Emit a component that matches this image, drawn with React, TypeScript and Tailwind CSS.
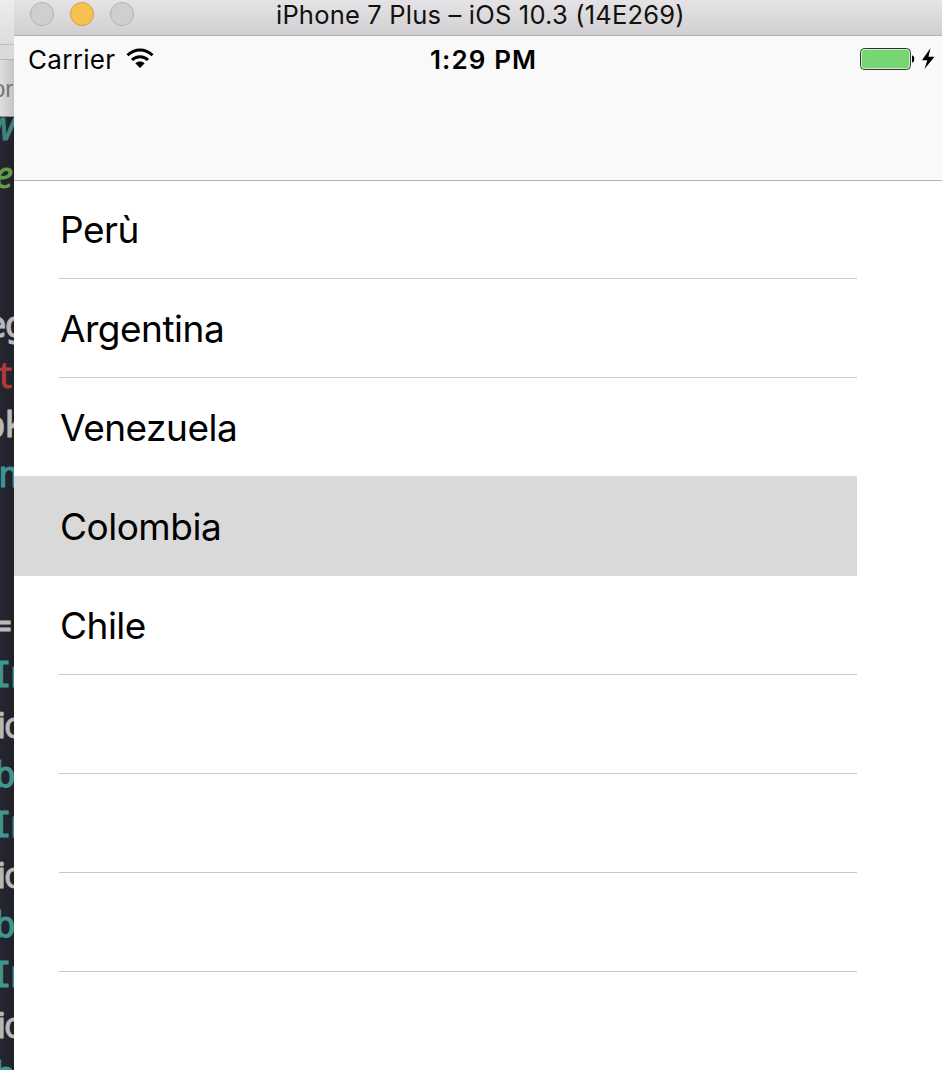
const codeLines: { text: string; cls: string }[] = [
  { text: "w", cls: "text-[#3f8482] italic -ml-[13px] text-[40px] font-['Open_Sans']" },
  { text: "e", cls: "text-[#5f9f4d] italic -ml-[5px] font-['Open_Sans']" },
  { text: "", cls: "" },
  { text: "", cls: "" },
  { text: "eg", cls: "text-[#b9b9bb] -ml-[15px]" },
  { text: "t", cls: "text-[#b03a3a] -ml-[1px] font-['Open_Sans']" },
  { text: "ok", cls: "text-[#b9b9bb] -ml-[16px]" },
  { text: "n", cls: "text-[#3f9691] -ml-[2px]" },
  { text: "", cls: "" },
  { text: "", cls: "" },
  { text: "=", cls: "text-[#b9b9bb] -ml-[10px]" },
  { text: "In", cls: "text-[#3f9691] -ml-[10px]" },
  { text: "io", cls: "text-[#b9b9bb] -ml-[3px] font-['Open_Sans']" },
  { text: "b", cls: "text-[#3f9691] -ml-[6px]" },
  { text: "In", cls: "text-[#3f9691] -ml-[10px]" },
  { text: "io", cls: "text-[#b9b9bb] -ml-[3px] font-['Open_Sans']" },
  { text: "b", cls: "text-[#3f9691] -ml-[6px]" },
  { text: "In", cls: "text-[#3f9691] -ml-[10px]" },
  { text: "io", cls: "text-[#b9b9bb] -ml-[3px] font-['Open_Sans']" },
  { text: "b", cls: "text-[#3f9691] -ml-[6px]" },
];

const rows = ["Perù", "Argentina", "Venezuela", "Colombia", "Chile", "", "", ""];

function EditorStrip() {
  return (
    <aside className="flex h-full w-[14px] shrink-0 flex-col overflow-hidden bg-linear-to-r from-[#252630] to-[#202128]">
      <div className="h-[45px] shrink-0 border-b border-[#bdbdbd] bg-linear-to-b from-[#ededed] to-[#dcdcdc]" />
      <div className="h-[15px] shrink-0 border-b border-[#b5b5b5] bg-[#dadada]" />
      <div className="h-[57px] shrink-0 overflow-hidden border-b border-[#8e8e8e] bg-linear-to-r from-[#dedede] to-[#c4c4c4] pt-[14px]">
        <div className="-ml-[8px] whitespace-nowrap font-['Liberation_Sans'] text-[24px] leading-[29px] text-[#777]">or</div>
      </div>
      <div className="-mt-[17px] flex flex-col font-['DejaVu_Sans_Mono',monospace] text-[36px] tracking-[-2px] [-webkit-text-stroke:1px_currentColor]">
        {codeLines.map((line, i) => (
          <div key={i} className="h-[50px] shrink-0 whitespace-nowrap">
            <div className={`leading-[49px] ${line.cls}`}>{line.text}</div>
          </div>
        ))}
      </div>
    </aside>
  );
}

function TitleBar() {
  return (
    <header className="flex h-[36px] shrink-0 items-start border-b border-[#b0aeb0] bg-linear-to-b from-[#e5e3e5] to-[#d1cfd1]">
      <div className="flex gap-[16px] pt-[2px] pl-[16px]">
        <span className="size-[24px] rounded-full border border-[#b2b1b2] bg-[#d0cfd0]" />
        <span className="size-[24px] rounded-full border border-[#dc9c38] bg-[#f7c151]" />
        <span className="size-[24px] rounded-full border border-[#b2b1b2] bg-[#d0cfd0]" />
      </div>
      <h1 className="ml-[142px] whitespace-nowrap text-[25.5px] leading-[30px] tracking-[0.2px] text-[#111]">
        iPhone 7 Plus – iOS 10.3 (14E269)
      </h1>
    </header>
  );
}

function StatusBar() {
  return (
    <div className="flex h-[48px] items-center pl-[14px] text-black">
      <span className="w-[98px] whitespace-nowrap text-[26px] leading-[48px] tracking-[0.3px]">Carrier</span>
      <svg width="28" height="22" viewBox="0 0 28 22" fill="none" stroke="black" strokeWidth="3" className="-mt-[5px]">
        <path d="M1.5 8.2C8.7 1.1 19.3 1.1 26.5 8.2" />
        <path d="M6 13C10.6 8.7 17.4 8.7 22 13" />
        <path d="M9.3 16.3C12.1 13.9 15.9 13.9 18.7 16.3L14 21Z" fill="black" stroke="none" />
      </svg>
      <span className="ml-[276px] w-[110px] whitespace-nowrap text-[26px] leading-[48px] font-semibold tracking-[1.1px]">1:29 PM</span>
      <svg width="78" height="24" viewBox="0 0 78 24" className="-mt-[2px] ml-[319px] shrink-0">
        <rect x="1.5" y="1.5" width="50" height="21" rx="4" fill="#76d672" stroke="#333" />
        <rect x="2.5" y="2.5" width="48" height="19" rx="3" fill="none" stroke="#c9edc8" />
        <path d="M53 8.5C56 8.5 56 15.5 53 15.5Z" fill="black" />
        <path d="M71.5 1L63 13.2H68.3L65.5 22L75.5 9.8H69.5Z" fill="black" />
      </svg>
    </div>
  );
}

export default function App() {
  return (
    <div className="flex h-[1070px] w-[942px] overflow-hidden bg-white font-['Inter',sans-serif]">
      <EditorStrip />
      <main className="flex min-w-0 flex-1 flex-col bg-white">
        <TitleBar />
        <nav className="h-[145px] shrink-0 border-b border-[#b2b2b2] bg-[#f9f9f9]">
          <StatusBar />
        </nav>
        <ul className="-mt-px flex w-[843px] flex-col">
          {rows.map((name, i) =>
            name === "Colombia" ? (
              <li key={i} className="-mt-px h-[100px] bg-[#d9d9d9] pl-[46px]">
                <div className="pt-px text-[37px] leading-[99px] tracking-[-0.5px] text-black">{name}</div>
              </li>
            ) : (
              <li key={i} className="h-[99px] pl-[45px]">
                <div className={`h-[98px] pl-px text-[37px] leading-[99px] tracking-[-0.5px] text-black ${name === "Venezuela" ? "" : "box-content border-b border-[#c8c7cc]"}`}>
                  {name}
                </div>
              </li>
            )
          )}
        </ul>
      </main>
    </div>
  );
}
